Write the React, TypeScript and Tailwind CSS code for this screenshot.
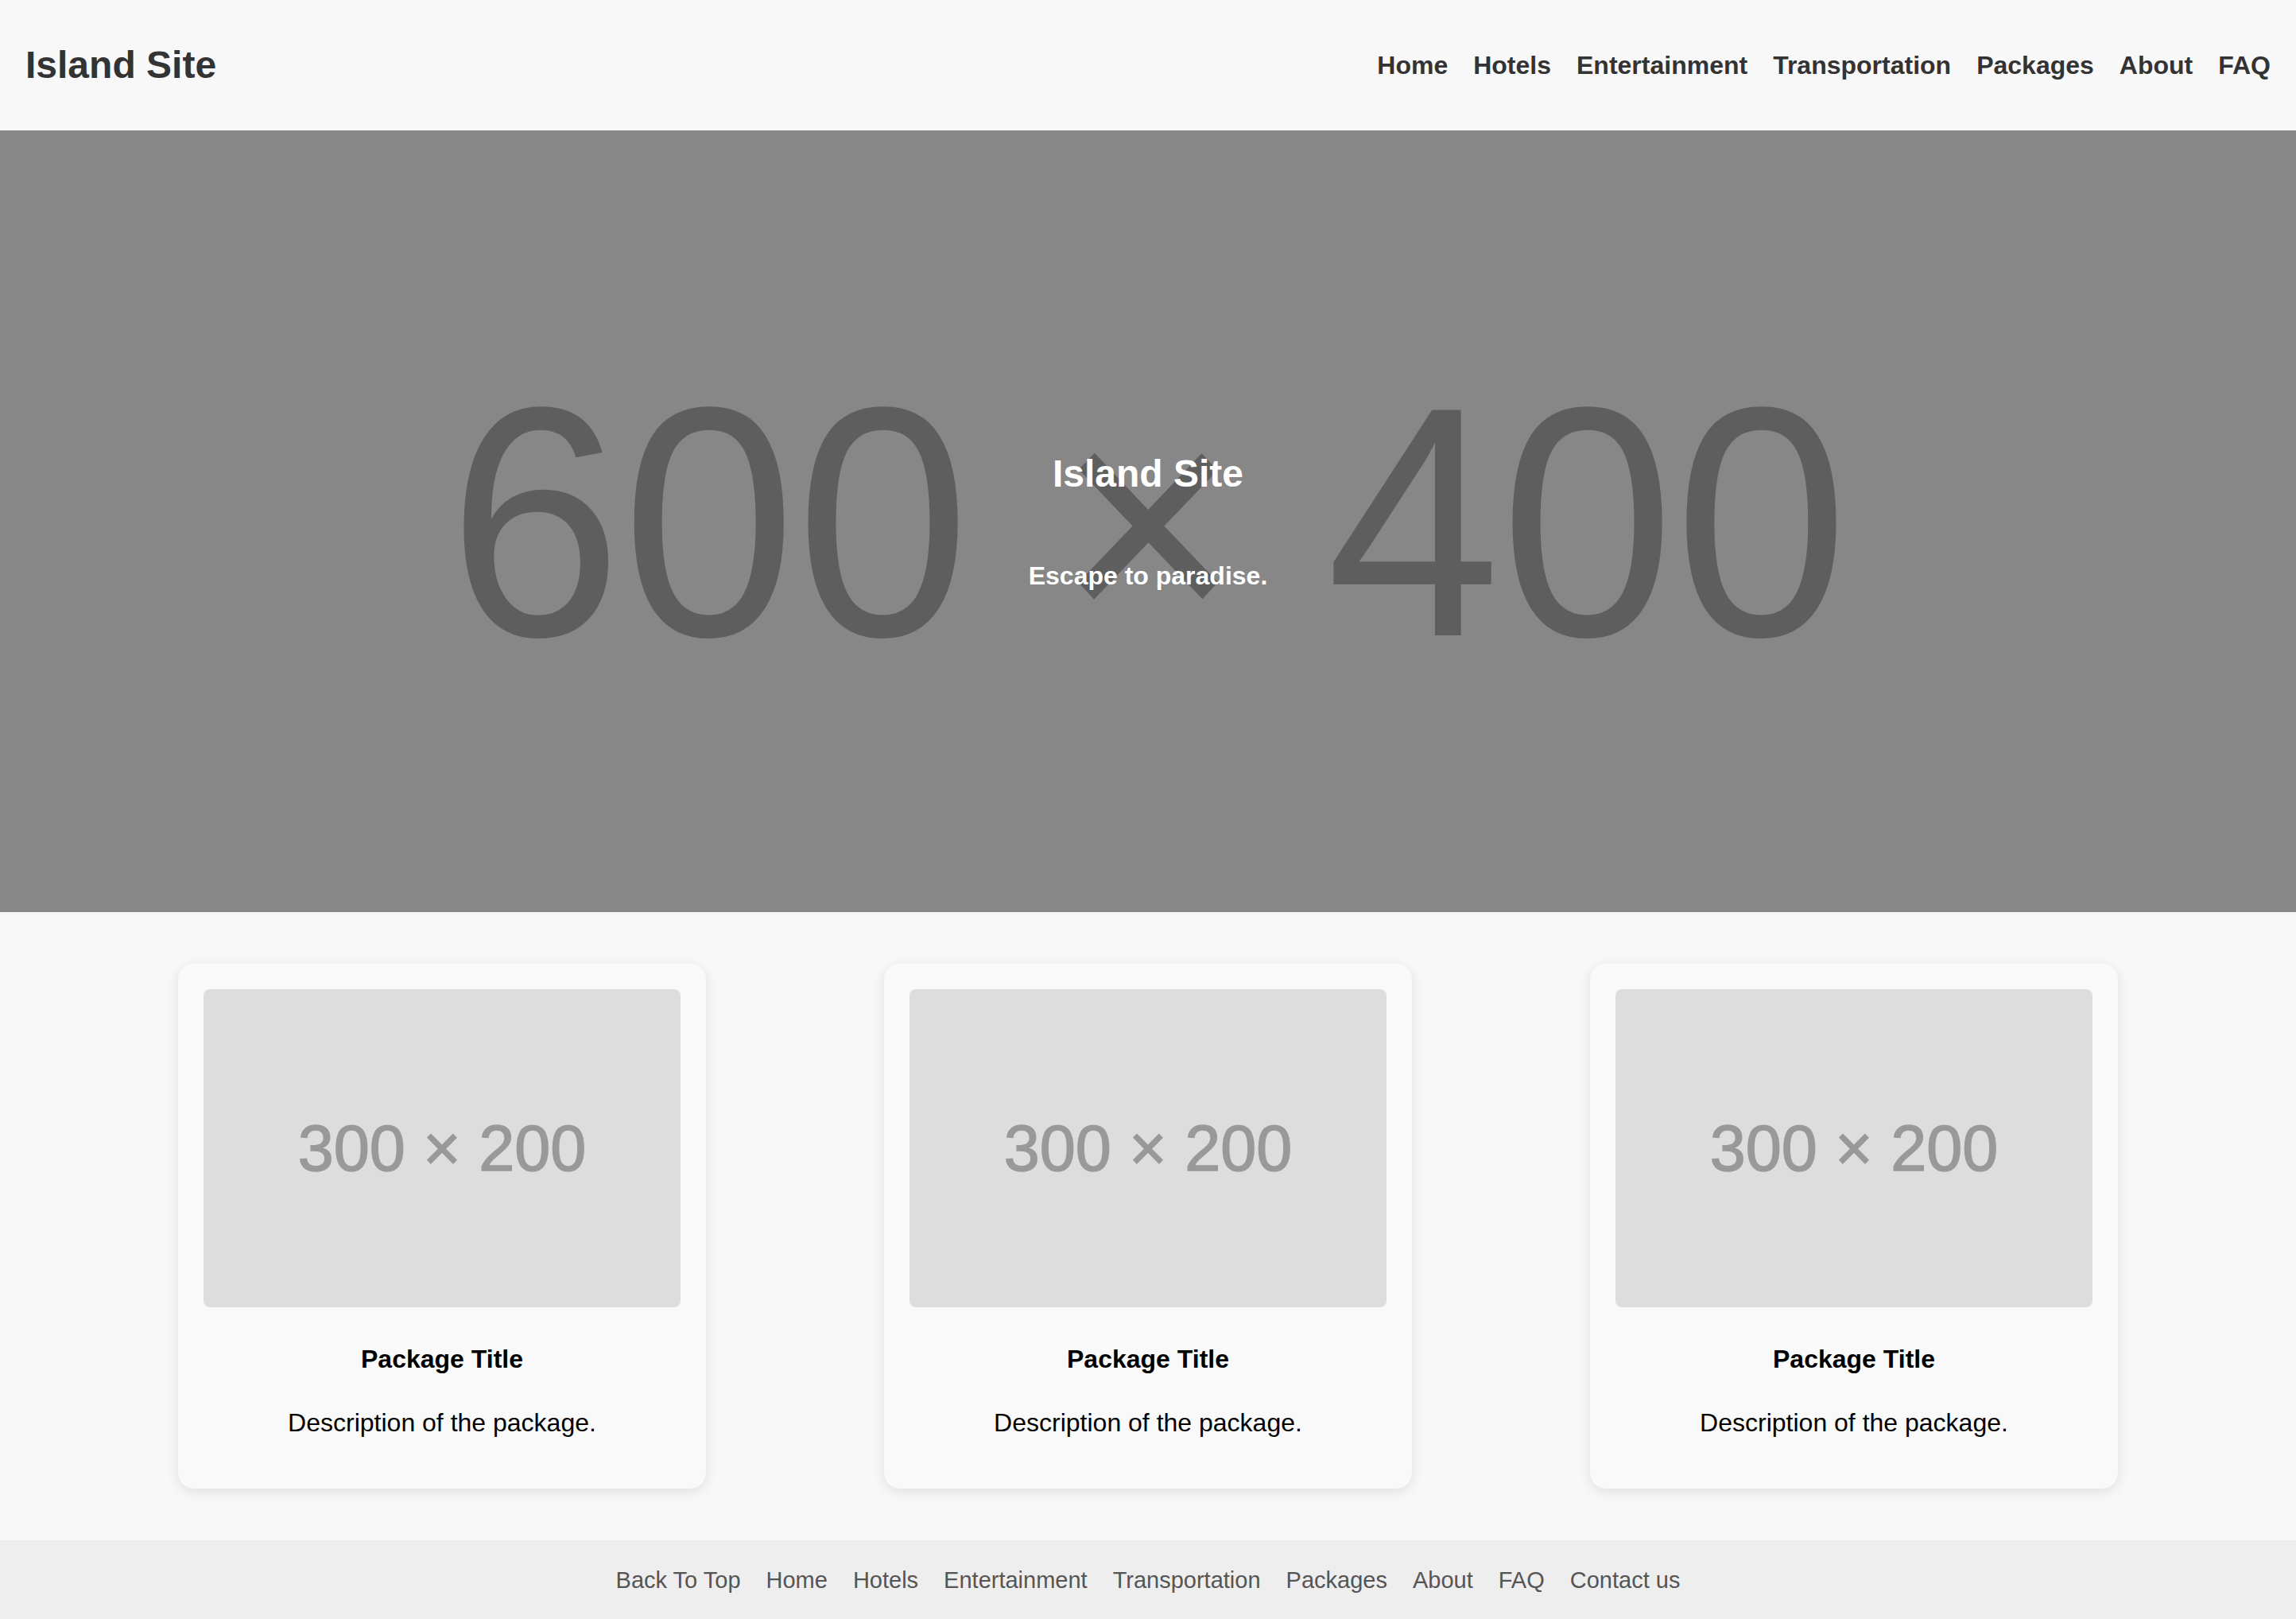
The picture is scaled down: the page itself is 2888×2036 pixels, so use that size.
const navLinks = ["Home", "Hotels", "Entertainment", "Transportation", "Packages", "About", "FAQ"];
const footerLinks = ["Back To Top", ...navLinks, "Contact us"];

function PackageCard() {
  return (
    <div className="w-[664px] p-8 rounded-[20px] bg-[#f9f9f9] shadow-[0_4px_16px_rgba(0,0,0,0.1)] text-center">
      <div className="h-[400px] w-[600px] rounded-[8px] bg-[#dddddd] flex items-center justify-center">
        <span className="whitespace-pre leading-none text-[81px] text-[#999999] [-webkit-text-stroke:1.5px_#999999]">
          300 × 200
        </span>
      </div>
      <h3 className="mt-[47px] text-[32px] leading-[37px] font-bold text-black">Package Title</h3>
      <p className="mt-[43px] mb-8 text-[32px] leading-[37px] text-black">Description of the package.</p>
    </div>
  );
}

export default function App() {
  return (
    <div className="min-h-screen bg-[#f8f8f8] font-['Liberation_Sans',Arial,sans-serif]">
      <header className="h-[164px] px-8 flex items-center justify-between bg-[#f8f8f8]">
        <h1 className="text-[48px] font-bold text-[#333333] leading-none">Island Site</h1>
        <nav className="flex gap-8">
          {navLinks.map((l) => (
            <a key={l} href="#" className="text-[32px] font-bold text-[#333333] leading-none">
              {l}
            </a>
          ))}
        </nav>
      </header>

      {/* hero: placeholder image with text on top */}
      <section className="relative h-[983px] bg-[#878787] overflow-hidden">
        <div className="absolute inset-0 flex items-center justify-center">
          <span className="inline-block whitespace-pre leading-none text-[412px] text-[#5e5e5e] scale-x-[0.955]">
            600 × 400
          </span>
        </div>
        <div className="relative h-full flex flex-col items-center justify-center text-white text-center">
          <h2 className="text-[48px] leading-[55px] font-bold">Island Site</h2>
          <p className="mt-[83px] text-[32px] leading-[37px] font-bold">Escape to paradise.</p>
        </div>
      </section>

      <section className="py-[65px] flex justify-evenly">
        <PackageCard />
        <PackageCard />
        <PackageCard />
      </section>

      <footer className="h-[100px] bg-[#eeeeee] flex items-center justify-center gap-8">
        {footerLinks.map((l) => (
          <a key={l} href="#" className="text-[29px] text-[#555555] leading-none">
            {l}
          </a>
        ))}
      </footer>
    </div>
  );
}
